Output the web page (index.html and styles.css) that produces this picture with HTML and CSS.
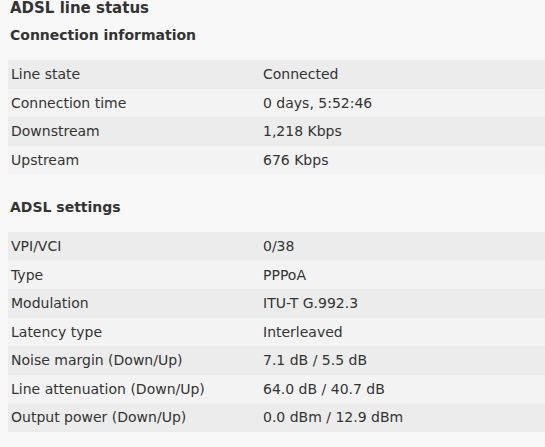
FILE: index.html
```html
<!DOCTYPE html>
<html>
<head>
<meta charset="utf-8">
<link rel="stylesheet" href="styles.css">
</head>
<body>
<div class="page">
  <h1 class="title">ADSL line status</h1>
  <h2 class="section">Connection information</h2>
  <table class="info">
    <tr><td class="label">Line state</td><td>Connected</td></tr>
    <tr><td class="label">Connection time</td><td>0 days, 5:52:46</td></tr>
    <tr><td class="label">Downstream</td><td>1,218 Kbps</td></tr>
    <tr><td class="label">Upstream</td><td>676 Kbps</td></tr>
  </table>
  <h2 class="section second">ADSL settings</h2>
  <table class="info">
    <tr><td class="label">VPI/VCI</td><td>0/38</td></tr>
    <tr><td class="label">Type</td><td>PPPoA</td></tr>
    <tr><td class="label">Modulation</td><td>ITU-T G.992.3</td></tr>
    <tr><td class="label">Latency type</td><td>Interleaved</td></tr>
    <tr><td class="label">Noise margin (Down/Up)</td><td>7.1 dB / 5.5 dB</td></tr>
    <tr><td class="label">Line attenuation (Down/Up)</td><td>64.0 dB / 40.7 dB</td></tr>
    <tr><td class="label">Output power (Down/Up)</td><td>0.0 dBm / 12.9 dBm</td></tr>
  </table>
</div>
</body>
</html>
```
FILE: styles.css
```css
html, body {
  margin: 0;
  padding: 0;
  background: #f8f8f8;
}
body {
  font-family: "DejaVu Sans", Verdana, sans-serif;
  color: #333;
}
.page {
  padding: 0 0 0 8px;
}
.title {
  margin: 0;
  padding: 0 0 0 2px;
  font-size: 15px;
  line-height: 17px;
  font-weight: bold;
  color: #333;
}
.section {
  margin: 10px 0 0 0;
  padding: 0 0 0 2px;
  font-size: 14px;
  line-height: 17px;
  font-weight: bold;
  color: #333;
}
.section.second {
  margin-top: 25px;
}
.info {
  border-collapse: collapse;
  width: 560px;
  margin-top: 16px;
  font-size: 14px;
}
.info td {
  height: 28.5px;
  padding: 0 3px;
  vertical-align: middle;
}
.info td.label {
  width: 246px;
}
.info tr:nth-child(odd) td {
  background: #ececec;
}
.info tr:nth-child(even) td {
  background: #f3f3f3;
}
```
